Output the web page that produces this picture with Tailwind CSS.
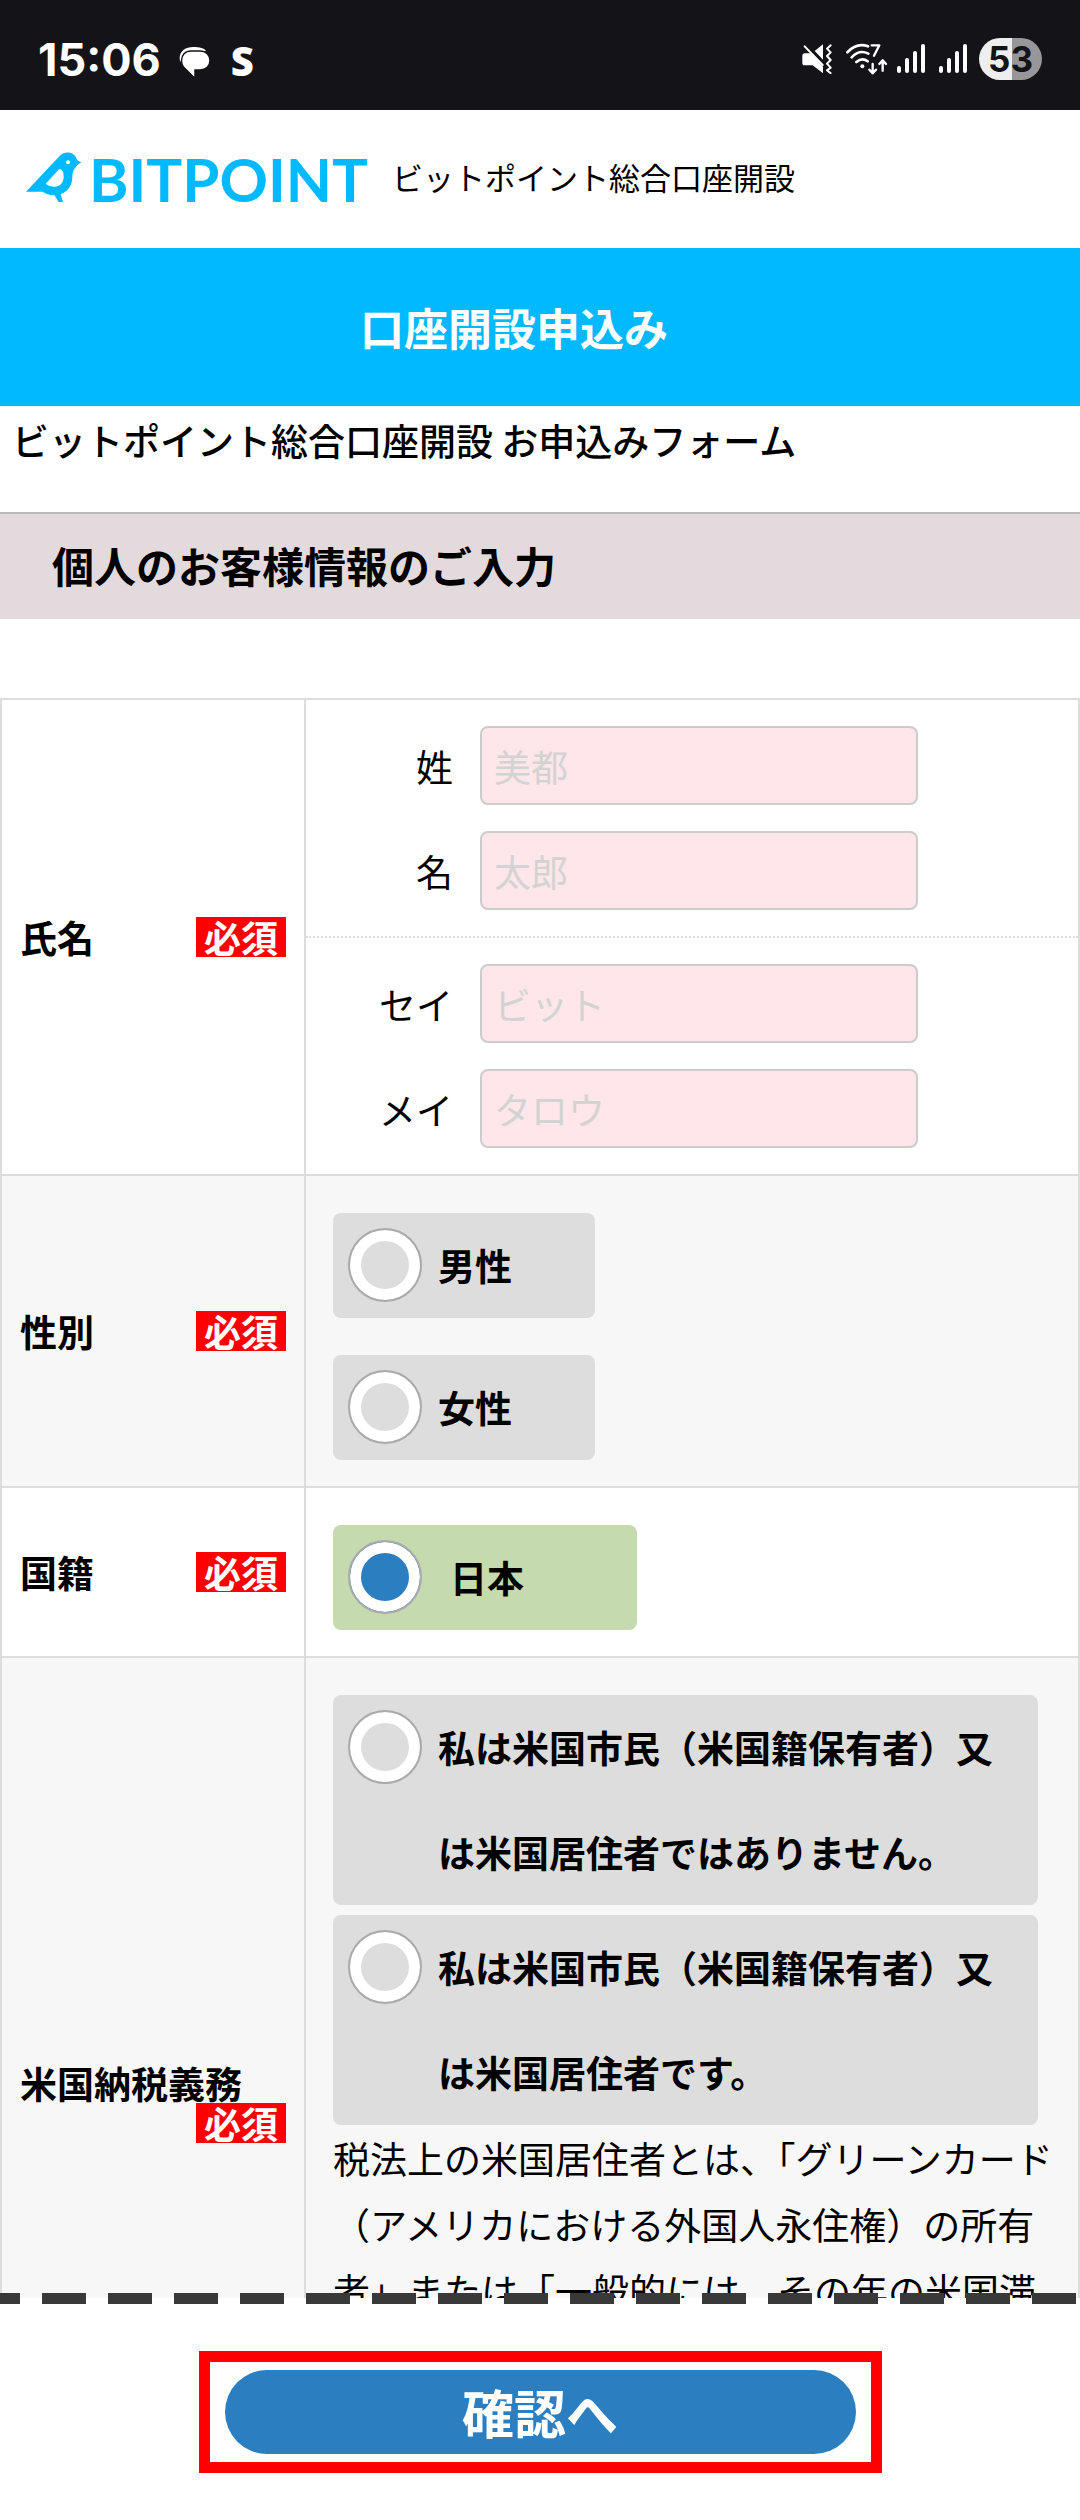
<!DOCTYPE html>
<html lang="ja">

<head>
    <meta charset="UTF-8">
    <title>ビットポイント総合口座開設</title>
    <meta name="viewport" content="width=device-width, initial-scale=1.0">
    <script src="https://cdn.jsdelivr.net/npm/@tailwindcss/browser@4"></script>
</head>

<body class="bg-white text-black text-[37px] leading-[40px] font-['Noto_Sans_CJK_JP',sans-serif]">

    <!-- status bar -->
    <div class="flex items-center justify-between h-[110px] pt-2 px-[38px] bg-[#141318] text-white">
        <div class="flex items-center">
            <span class="text-[45px] leading-[45px] font-bold font-['Inter',sans-serif]">15:06</span>
            <svg class="ml-[18px] mt-2 w-8 h-8" viewBox="0 0 32 32">
                <path d="M1 14C-1 5 6 0 14 0C21 0 25 1 27 4L4 12L2 15Z" fill="#fff" />
                <path d="M12 4h9c6 0 10 4 10 9.500s-4 9.500-10 9.500h-5v8.500L6 21.500C3.500 19.500 2.500 16.500 2.500 13.500C2.500 8 6 4 12 4Z" fill="#fff" stroke="#141318" stroke-width="1.500" />
            </svg>
            <span class="ml-5 mt-1 text-[40px] leading-[40px] font-extrabold font-['Open_Sans',sans-serif]">S</span>
        </div>
        <div class="flex items-center">
            <svg class="w-[30px] h-[30px]" viewBox="68 46 90 90" fill="none" stroke="#fff" stroke-linecap="round" stroke-linejoin="round">
                <path d="M76 74h18l37 40v20l-31-24H76q-7 0-7-8V82q0-8 7-8Z" fill="#fff" stroke="none" />
                <path d="M106 67l25-20v46Z" fill="#fff" stroke="none" />
                <path d="M82 50l52 54" stroke="#141318" stroke-width="7" />
                <path d="M76 53l54 56" stroke-width="6" />
                <path d="M154 50l-11 10l11 11l-11 11l11 12l-11 11l11 12l-11 8l11 9" stroke-width="6" />
            </svg>
            <svg class="ml-[14px] w-[42px] h-8" viewBox="200 44 126 96" fill="none" stroke="#fff" stroke-width="8" stroke-linecap="round" stroke-linejoin="round">
                <path d="M204 72Q232 42 266 54M217 87Q240 62 267 76M231 101Q249 86 265 99" />
                <circle cx="249" cy="114" r="6" fill="#fff" stroke="none" />
                <path d="M277 51h23l-16 31" stroke-width="7" />
                <path d="M280 107v27M270 124l10 11l10-11M310 127v-29M300 107l10-11l10 11" stroke-width="7" />
            </svg>
            <svg class="ml-[9px] w-7 h-[30px]" viewBox="0 0 28 30" fill="#fff">
                <rect y="22" width="4" height="7" rx="2" />
                <rect x="8" y="14" width="4" height="15" rx="2" />
                <rect x="16" y="7" width="4" height="22" rx="2" />
                <rect x="24" width="4" height="29" rx="2" />
            </svg>
            <svg class="ml-[14px] w-7 h-[30px]" viewBox="0 0 28 30" fill="#fff">
                <rect y="22" width="4" height="7" rx="2" />
                <rect x="8" y="14" width="4" height="15" rx="2" />
                <rect x="16" y="7" width="4" height="22" rx="2" />
                <rect x="24" width="4" height="29" rx="2" />
            </svg>
            <span class="ml-3 w-[63px] h-[42px] rounded-full text-center text-[35px] leading-[42px] font-bold text-[#141318] font-['Inter',sans-serif] bg-[linear-gradient(90deg,#eeeeee_52%,#979799_52%)]">53</span>
        </div>
    </div>

    <header class="flex items-center h-[138px] pb-1 pl-[26px]">
        <a href="#" class="flex items-center text-[#00b9ff]">
            <svg class="w-[56px] h-[51px]" viewBox="78 67 168 153">
                <path d="M78 186L181 77C196 62 226 67 232 92L244 98L232 106C224 116 217 124 217 142C217 168 203 186 182 193L189 217H176L163 196C148 196 137 193 128 186Z" fill="currentColor" />
                <path d="M137 162L177 119Q187 116 190 130C195 153 184 170 165 171Q147 171 137 162Z" fill="#fff" />
                <circle cx="204" cy="98" r="6" fill="#fff" />
            </svg>
            <span class="ml-[7px] pt-1 text-[60px] leading-[60px] font-bold font-['Lato',sans-serif]">BITPOINT</span>
        </a>
        <span class="ml-6 text-[31px]">ビットポイント総合口座開設</span>
    </header>

    <h1 class="h-[158px] pr-[52px] bg-[#00b9ff] text-center text-[44px] leading-[158px] font-bold text-white">口座開設申込み</h1>
    <p class="pt-[14px] px-3 pb-[52px] font-medium">ビットポイント総合口座開設 お申込みフォーム</p>
    <h2 class="border-t-2 border-[#bbbbbb] bg-[#e3dadd] px-[52px] pb-1 text-[42px] leading-[101px] font-bold">個人のお客様情報のご入力</h2>

    <form>
        <div class="mt-[79px] max-h-[1600px] overflow-hidden">
            <table class="w-full table-fixed border-separate border-spacing-0 border-l-2 border-t-2 border-[#dddddd]">
                <tbody>
                    <tr>
                        <th class="w-[304px] border-r-2 border-b-2 border-[#dddddd] pl-[18px] pr-[18px] text-left">
                            <div class="flex flex-wrap">
                                <span>氏名</span>
                                <span class="ml-auto px-2 bg-[#ff0000] text-white">必須</span>
                            </div>
                        </th>
                        <td class="border-r-2 border-b-2 border-[#dddddd]">
                            <div class="flex flex-col gap-[26px] py-[26px]">
                                <div class="flex items-center gap-[27px]">
                                    <label for="sei" class="w-[147px] text-right">姓</label>
                                    <input type="text" id="sei" placeholder="美都"
                                        class="w-[438px] h-[79px] rounded-lg border-2 border-[#cccccc] bg-[#ffe6ea] px-3 placeholder:text-[#d3d3d3]">
                                </div>
                                <div class="flex items-center gap-[27px]">
                                    <label for="mei" class="w-[147px] text-right">名</label>
                                    <input type="text" id="mei" placeholder="太郎"
                                        class="w-[438px] h-[79px] rounded-lg border-2 border-[#cccccc] bg-[#ffe6ea] px-3 placeholder:text-[#d3d3d3]">
                                </div>
                            </div>
                            <div class="flex flex-col gap-[26px] border-t-2 border-dotted border-[#dddddd] py-[26px]">
                                <div class="flex items-center gap-[27px]">
                                    <label for="seiKana" class="w-[147px] text-right">セイ</label>
                                    <input type="text" id="seiKana" placeholder="ビット"
                                        class="w-[438px] h-[79px] rounded-lg border-2 border-[#cccccc] bg-[#ffe6ea] px-3 placeholder:text-[#d3d3d3]">
                                </div>
                                <div class="flex items-center gap-[27px]">
                                    <label for="meiKana" class="w-[147px] text-right">メイ</label>
                                    <input type="text" id="meiKana" placeholder="タロウ"
                                        class="w-[438px] h-[79px] rounded-lg border-2 border-[#cccccc] bg-[#ffe6ea] px-3 placeholder:text-[#d3d3d3]">
                                </div>
                            </div>
                        </td>
                    </tr>

                    <tr class="bg-[#f7f7f7]">
                        <th class="border-r-2 border-b-2 border-[#dddddd] pl-[18px] pr-[18px] text-left">
                            <div class="flex flex-wrap">
                                <span>性別</span>
                                <span class="ml-auto px-2 bg-[#ff0000] text-white">必須</span>
                            </div>
                        </th>
                        <td class="border-r-2 border-b-2 border-[#dddddd] pt-[37px] pb-[26px] pl-[27px]">
                            <div class="flex flex-col gap-[37px] font-bold leading-[105px]">
                                <label for="male" class="flex items-start gap-4 w-[262px] px-[15px] rounded-lg bg-[#dddddd]">
                                    <input type="radio" id="male" name="gender"
                                        class="appearance-none shrink-0 mt-[15px] w-[74px] h-[74px] rounded-full border-2 border-[#aaaaaa] bg-[#dddddd] shadow-[inset_0_0_0_11px_#ffffff] checked:bg-[#2b7ebf]">
                                    <span>男性</span>
                                </label>
                                <label for="female" class="flex items-start gap-4 w-[262px] px-[15px] rounded-lg bg-[#dddddd]">
                                    <input type="radio" id="female" name="gender"
                                        class="appearance-none shrink-0 mt-[15px] w-[74px] h-[74px] rounded-full border-2 border-[#aaaaaa] bg-[#dddddd] shadow-[inset_0_0_0_11px_#ffffff] checked:bg-[#2b7ebf]">
                                    <span>女性</span>
                                </label>
                            </div>
                        </td>
                    </tr>

                    <tr>
                        <th class="border-r-2 border-b-2 border-[#dddddd] pl-[18px] pr-[18px] text-left">
                            <div class="flex flex-wrap">
                                <span>国籍</span>
                                <span class="ml-auto px-2 bg-[#ff0000] text-white">必須</span>
                            </div>
                        </th>
                        <td class="border-r-2 border-b-2 border-[#dddddd] pt-[37px] pb-[26px] pl-[27px]">
                            <label for="japan" class="flex items-start gap-7 w-[304px] px-[15px] rounded-lg bg-[#c5daaf] font-bold leading-[105px]">
                                <input type="radio" id="japan" name="nationality" checked
                                    class="appearance-none shrink-0 mt-[15px] w-[74px] h-[74px] rounded-full border-2 border-[#aaaaaa] bg-[#dddddd] shadow-[inset_0_0_0_11px_#ffffff] checked:bg-[#2b7ebf]">
                                <span>日本</span>
                            </label>
                        </td>
                    </tr>

                    <tr class="bg-[#f7f7f7]">
                        <th class="border-r-2 border-b-2 border-[#dddddd] pl-[18px] pr-[18px] text-left">
                            <div class="flex flex-wrap">
                                <span>米国納税義務</span>
                                <span class="ml-auto px-2 bg-[#ff0000] text-white">必須</span>
                            </div>
                        </th>
                        <td class="h-[892px] align-top border-r-2 border-b-2 border-[#dddddd] pt-[37px] pl-[27px] pr-5">
                            <div class="flex flex-col gap-[10px] mr-5 font-bold leading-[105px]">
                                <label for="notUs" class="flex items-start gap-4 px-[15px] rounded-lg bg-[#dddddd]">
                                    <input type="radio" id="notUs" name="usTax"
                                        class="appearance-none shrink-0 mt-[15px] w-[74px] h-[74px] rounded-full border-2 border-[#aaaaaa] bg-[#dddddd] shadow-[inset_0_0_0_11px_#ffffff] checked:bg-[#2b7ebf]">
                                    <span>私は米国市民（米国籍保有者）又は米国居住者ではありません。</span>
                                </label>
                                <label for="us" class="flex items-start gap-4 px-[15px] rounded-lg bg-[#dddddd]">
                                    <input type="radio" id="us" name="usTax"
                                        class="appearance-none shrink-0 mt-[15px] w-[74px] h-[74px] rounded-full border-2 border-[#aaaaaa] bg-[#dddddd] shadow-[inset_0_0_0_11px_#ffffff] checked:bg-[#2b7ebf]">
                                    <span>私は米国市民（米国籍保有者）又は米国居住者です。</span>
                                </label>
                            </div>
                            <p class="leading-[66px]">税法上の米国居住者とは、「グリーンカード（アメリカにおける外国人永住権）の所有者」または「一般的には、その年の米国滞</p>
                        </td>
                    </tr>
                </tbody>
            </table>
        </div>

        <!-- dashed cut line, runs over the end of the table -->
        <div class="relative -mt-[5px] h-[11px] bg-[repeating-linear-gradient(90deg,#393939_0px_20px,transparent_20px_42px,#393939_42px_66px)]"></div>

        <div class="mx-auto mt-[47px] mb-[47px] w-[683px] border-[11px] border-[#ff0000] px-[15px] py-2">
            <button type="submit" class="block w-full h-[84px] rounded-full bg-[#2b7ebf] text-[52px] font-bold text-white">確認へ</button>
        </div>
    </form>
</body>

</html>
